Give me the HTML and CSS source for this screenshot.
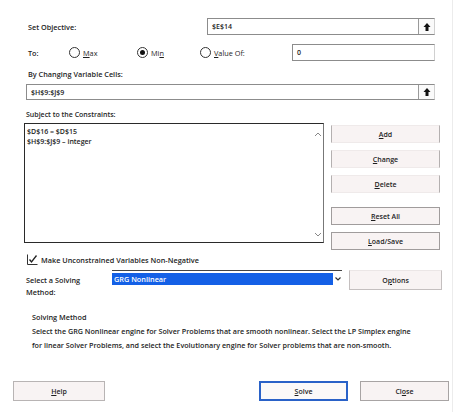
FILE: index.html
```html
<!DOCTYPE html>
<html>
<head>
<meta charset="utf-8">
<link rel="stylesheet" href="styles.css">
</head>
<body>
<div class="dlg">
  <div class="row r-obj">
    <span class="lbl lbl-obj">Set Objective:</span>
    <div class="field f-obj">
      <span class="ftext">$E$14</span>
      <span class="refbtn"><svg width="14" height="14" viewBox="0 0 14 14"><path d="M7 3 L10.5 7 H8.5 V11 H5.5 V7 H3.5 Z" fill="#111"/></svg></span>
    </div>
  </div>
  <div class="row r-to">
    <span class="lbl lbl-to">To:</span>
    <span class="radio r-max"><span class="circ"></span><span><u>M</u>ax</span></span>
    <span class="radio r-min"><span class="circ on"></span><span>Mi<u>n</u></span></span>
    <span class="radio r-val"><span class="circ"></span><span><u>V</u>alue Of:</span></span>
    <div class="field f-val"><span class="ftext">0</span></div>
  </div>
  <div class="lbl lbl-var">By Changing Variable Cells:</div>
  <div class="field f-var">
    <span class="ftext">$H$9:$J$9</span>
    <span class="refbtn"><svg width="14" height="14" viewBox="0 0 14 14"><path d="M7 3 L10.5 7 H8.5 V11 H5.5 V7 H3.5 Z" fill="#111"/></svg></span>
  </div>
  <div class="lbl lbl-sub">Subject to the Constraints:</div>
  <div class="cons">
    <div class="list">
      <div class="items">
        <div>$D$16 = $D$15</div>
        <div>$H$9:$J$9 – integer</div>
      </div>
      <div class="scroll">
        <svg width="8" height="6" viewBox="0 0 8 6"><path d="M1 5 L4 2 L7 5" fill="none" stroke="#888" stroke-width="1"/></svg>
        <svg width="8" height="6" viewBox="0 0 8 6"><path d="M1 1 L4 4 L7 1" fill="none" stroke="#888" stroke-width="1"/></svg>
      </div>
    </div>
    <div class="btns">
      <div class="btn soft"><u>A</u>dd</div>
      <div class="btn soft"><u>C</u>hange</div>
      <div class="btn soft"><u>D</u>elete</div>
      <div class="btn full gap"><u>R</u>eset All</div>
      <div class="btn full"><u>L</u>oad/Save</div>
    </div>
  </div>
  <div class="chk-row">
    <svg class="chk" width="11" height="11" viewBox="0 0 11 11"><path d="M0.5 0.5 V10.5 H10.5" fill="none" stroke="#333" stroke-width="1"/><path d="M2.5 5.5 L4.5 8 L9.5 1.5" fill="none" stroke="#222" stroke-width="1.3"/></svg>
    <span>Make Unconstrained Variables Non-Negative</span>
  </div>
  <div class="method-row">
    <div class="lbl lbl-method">Select a Solving<br>Method:</div>
    <div class="select">
      <span class="sel-val">GRG Nonlinear</span>
      <svg class="chev" width="8" height="6" viewBox="0 0 8 6"><path d="M1.5 1.5 L4 4 L6.5 1.5" fill="none" stroke="#333" stroke-width="1.2"/></svg>
    </div>
    <div class="btn opt">O<u>p</u>tions</div>
  </div>
  <div class="sm-title">Solving Method</div>
  <div class="desc">Select the GRG Nonlinear engine for Solver Problems that are smooth nonlinear. Select the LP Simplex engine<br>for linear Solver Problems, and select the Evolutionary engine for Solver problems that are non-smooth.</div>
  <div class="foot">
    <div class="btn fbtn help"><u>H</u>elp</div>
    <div class="btn fbtn solve"><u>S</u>olve</div>
    <div class="btn fbtn close">Cl<u>o</u>se</div>
  </div>
</div>
</body>
</html>
```

FILE: styles.css
```css
* { box-sizing: border-box; }
html, body { margin: 0; padding: 0; background: #fff; }
.dlg {
  width: 453px;
  height: 412px;
  overflow: hidden;
  font-family: "Open Sans", "Noto Sans", sans-serif;
  font-size: 7.3px;
  font-weight: 600;
  color: #1e1e1e;
  border-right: 1px solid #ececec;
}
u { text-decoration-thickness: 1px; text-underline-offset: 1px; }
.row { display: flex; align-items: center; }
.field {
  display: flex;
  align-items: center;
  height: 17px;
  border: 1px solid #8c8c8c;
  border-right-color: #d0d0d0;
  background: #fff;
}
.ftext { flex: 1; padding-left: 4px; font-size: 7px; }
.refbtn {
  width: 16px;
  height: 100%;
  border-left: 1px solid #9a9a9a;
  display: flex;
  align-items: center;
  justify-content: center;
  background: #fafafa;
}
.r-obj { margin-top: 18px; padding-left: 28px; height: 17px; }
.lbl-obj { width: 179px; }
.f-obj { width: 228px; }
.r-to { margin-top: 9px; padding-left: 28px; height: 17px; }
.lbl-to { width: 41px; }
.radio { display: flex; align-items: center; gap: 3px; font-weight: 500; }
.r-max { width: 68px; }
.r-min { width: 63px; }
.r-val { width: 92px; }
.circ {
  width: 11px; height: 11px;
  border: 1px solid #333;
  border-radius: 50%;
  display: flex; align-items: center; justify-content: center;
  background: #fff;
}
.circ.on::after {
  content: "";
  width: 5px; height: 5px; border-radius: 50%;
  background: #111;
}
.f-val { width: 143px; }
.lbl-var { margin: 8px 0 0 28px; height: 10px; line-height: 10px; }
.f-var { margin: 5px 0 0 26px; width: 409px; height: 16px; }
.lbl-sub { margin: 10px 0 0 26px; height: 10px; line-height: 10px; font-size: 7px; }
.cons { display: flex; margin-top: 3px; height: 120px; }
.list {
  margin-left: 24px;
  width: 300px;
  height: 120px;
  border: 1px solid #2a2a2a;
  border-right-color: #777;
  display: flex;
}
.items { flex: 1; padding: 3px 0 0 2px; font-size: 7px; line-height: 10px; }
.scroll {
  width: 10px;
  display: flex;
  flex-direction: column;
  justify-content: space-between;
  align-items: center;
  padding: 7px 1px 4px 0;
}
.btns { margin-left: 7px; width: 109px; padding-top: 2px; display: flex; flex-direction: column; gap: 7px; }
.btn {
  height: 18px;
  flex: none;
  display: flex;
  align-items: center;
  justify-content: center;
  background: #f8f3f3;
  font-size: 7px;
}
.btn.soft { border: 1px solid #b4b0b0; border-top-color: #efeaea; border-bottom-color: #efeaea; }
.btn.full { border: 1px solid #a09c9c; }
.btn.gap { margin-top: 7px; }
.chk-row { margin: 11px 0 0 27px; height: 11px; display: flex; align-items: center; gap: 3px; }
.method-row { display: flex; align-items: flex-start; margin-top: 5px; height: 28px; }
.lbl-method { margin: 4px 0 0 26px; width: 86px; line-height: 12px; }
.select {
  width: 230px;
  height: 16px;
  border-top: 1px solid #444;
  display: flex;
  align-items: center;
  padding: 1px 0 1px 0;
}
.sel-val {
  width: 221px;
  height: 12px;
  background: #1460e6;
  color: #fff;
  line-height: 12px;
  padding-left: 2px;
}
.chev { margin-left: 1px; }
.opt {
  margin-left: 7px;
  width: 93px;
  height: 20px;
  border: 1px solid #c4bfbf;
  border-top-color: #ebe6e6;
}
.sm-title { margin: 13px 0 0 32px; line-height: 12px; height: 12px; }
.desc { margin: 1px 0 0 32px; line-height: 14px; font-size: 7.2px; white-space: nowrap; }
.foot { display: flex; margin-top: 29px; }
.fbtn { height: 20px; width: 90px; }
.help { margin-left: 13px; width: 92px; border: 1px solid #b8b4b4; }
.solve { margin-left: 154px; width: 89px; border: 2px solid #2a62c8; background: #fbf9f9; }
.close { margin-left: 12px; width: 89px; border: 1px solid #a8a4a4; }
```
